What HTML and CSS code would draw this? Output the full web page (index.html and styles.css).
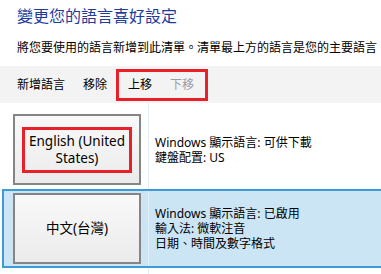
FILE: index.html
```html
<!DOCTYPE html>
<html lang="zh-Hant">
<head>
    <meta charset="UTF-8">
    <meta name="viewport" content="width=device-width, initial-scale=1.0">
    <title>語言</title>
    <link rel="stylesheet" href="styles.css">
</head>
<body>
    <div class="header">
        <h1>變更您的語言喜好設定</h1>
        <p>將您要使用的語言新增到此清單。清單最上方的語言是您的主要語言。</p>
    </div>
    <div class="toolbar">
        <button class="tool">新增語言</button>
        <button class="tool">移除</button>
        <div class="move-group">
            <button class="tool">上移</button>
            <button class="tool" disabled>下移</button>
        </div>
    </div>
    <div class="lang-list">
        <div class="lang-row">
            <div class="lang-cell">
                <div class="lang-btn"><span class="mark">English (United States)</span></div>
            </div>
            <div class="info-cell">
                <div>Windows 顯示語言: 可供下載</div>
                <div>鍵盤配置: US</div>
            </div>
        </div>
        <div class="lang-row selected">
            <div class="lang-cell">
                <div class="lang-btn">中文(台灣)</div>
            </div>
            <div class="info-cell">
                <div>Windows 顯示語言: 已啟用</div>
                <div>輸入法: 微軟注音</div>
                <div>日期、時間及數字格式</div>
            </div>
        </div>
    </div>
</body>
</html>
```

FILE: styles.css
```css
body {
    margin: 0;
    font-family: "Noto Sans", "Noto Sans CJK TC", sans-serif;
    color: #000;
    background: #fff;
    overflow: hidden;
}
.header {
    padding: 5px 0 0 17px;
}
.header h1 {
    margin: 0;
    font-size: 16px;
    line-height: 22px;
    font-weight: normal;
    color: #1e3c9c;
}
.header p {
    margin: 13px 0 10px;
    font-size: 12px;
    line-height: 16px;
    white-space: nowrap;
    overflow: hidden;
}
.toolbar {
    display: flex;
    align-items: center;
    height: 37px;
    padding-left: 8px;
    background: #f3f3f4;
}
.tool {
    border: 0;
    background: none;
    padding: 0 9px;
    font: inherit;
    font-size: 12px;
    line-height: 16px;
    color: #000;
}
.tool:disabled {
    color: #9c9cab;
}
.move-group {
    display: flex;
    align-items: center;
    height: 26px;
    padding-right: 2px;
    border: 3px solid #e8202a;
}
.lang-list {
    padding: 7px 0 10px 2px;
    background: linear-gradient(#e3edf8, #e3edf8) 148px 0 / 1px 100% no-repeat;
}
.lang-row {
    display: grid;
    grid-template-columns: 144px 1fr;
    border: 2px solid transparent;
    border-right: 0;
}
.lang-row.selected {
    background: #cce5f5;
    border-color: #3c9ad8;
}
.lang-cell {
    padding: 2px 7px 2px 9px;
}
.lang-btn {
    display: flex;
    align-items: center;
    justify-content: center;
    height: 67px;
    border: 2px solid #858585;
    background: linear-gradient(#f9f9f9, #ebebeb);
    font-size: 13.5px;
    line-height: 17px;
    text-align: center;
}
.mark {
    display: block;
    width: 104px;
    padding: 3px 0;
    border: 3px solid #e8202a;
}
.info-cell {
    display: flex;
    flex-direction: column;
    justify-content: center;
    padding-left: 6px;
    border-left: 1px solid #e3edf8;
    font-size: 12px;
    line-height: 15px;
}
```
